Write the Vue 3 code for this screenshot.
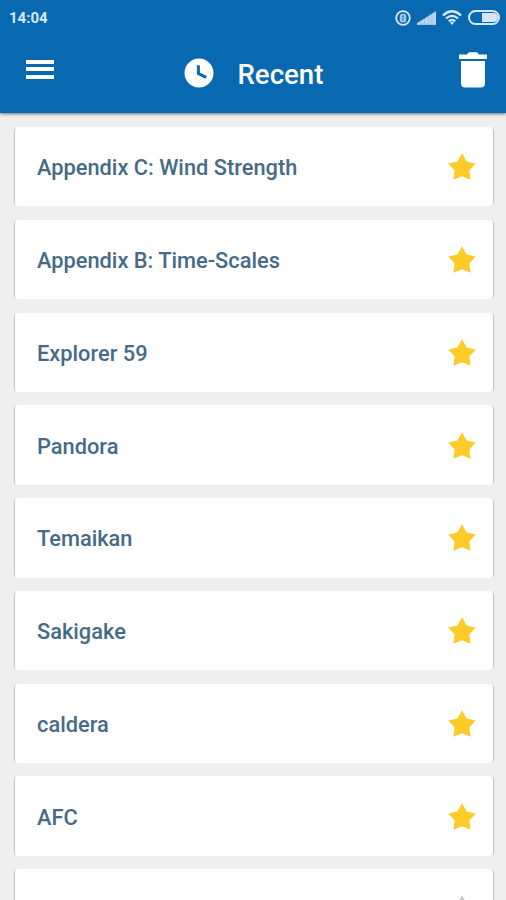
<script setup>
import { ref } from "vue";

const items = ref([
  { title: "Appendix C: Wind Strength", starred: true },
  { title: "Appendix B: Time-Scales", starred: true },
  { title: "Explorer 59", starred: true },
  { title: "Pandora", starred: true },
  { title: "Temaikan", starred: true },
  { title: "Sakigake", starred: true },
  { title: "caldera", starred: true },
  { title: "AFC", starred: true },
  { title: "", starred: false },
]);

function toggleStar(item) {
  item.starred = !item.starred;
}
</script>

<template>
  <div class="screen">
    <header class="top">
      <div class="status-bar">
        <span class="time">14:04</span>
        <div class="status-icons">
          <svg class="lock" viewBox="0 0 16 16">
            <circle cx="8" cy="8" r="6.8" fill="none" stroke="currentColor" stroke-width="1.8" />
            <rect x="4.8" y="3.7" width="6.4" height="8.6" rx="2.6" fill="currentColor" opacity="0.75" />
            <path d="M7 6.2h2M8 7.5v3" stroke="#0869b1" stroke-width="1" />
          </svg>
          <svg class="signal" viewBox="0 0 20 14">
            <path d="M0 14v-1.5L20 0v14z" fill="currentColor" opacity="0.75" />
            <path d="M0 14v-1.5l4-2.5v4zM4.6 14V9.7l3.2-2V14zM8.4 14V7.3l3.2-2.1V14zM12.2 14V4.9l3.2-2.1V14zM16 14V2.5L20 0v14z" fill="currentColor" />
          </svg>
          <svg class="wifi" viewBox="0 0 20 15">
            <g fill="none" stroke="currentColor" stroke-width="2.3">
              <path d="M1 5.3Q10-2.8 19 5.3" />
              <path d="M4 8.5Q10 3.2 16 8.5" />
              <path d="M6.8 11.3Q10 8.5 13.2 11.3" />
            </g>
            <path d="M8 12.4Q10 11 12 12.4L10 15z" fill="currentColor" />
          </svg>
          <svg class="battery" viewBox="0 0 32 15">
            <rect x="1" y="1" width="30" height="13" rx="6.5" fill="none" stroke="currentColor" stroke-width="2" />
            <path d="M14 3h11.5a4.5 4.5 0 0 1 0 9H14z" fill="currentColor" />
          </svg>
        </div>
      </div>

      <div class="toolbar">
        <button class="menu" aria-label="Menu">
          <span /><span /><span />
        </button>
        <h1 class="title">
          <svg class="clock" viewBox="0 0 30 30">
            <circle cx="15" cy="15" r="14.5" fill="#fff" />
            <path d="M14.4 7.3v8.2l7.8 3.8" fill="none" stroke="#0869b1" stroke-width="3" />
          </svg>
          <span>Recent</span>
        </h1>
        <button class="trash" aria-label="Clear">
          <svg viewBox="0 0 28 36">
            <path d="M0 2.5h8L10 .3h8l2 2.2h8V7H0zM2 9h24v22.5a4 4 0 0 1-4 4H6a4 4 0 0 1-4-4z" fill="#fff" />
          </svg>
        </button>
      </div>
    </header>

    <main class="list">
      <article v-for="(item, i) in items" :key="i" class="card">
        <span class="name">{{ item.title }}</span>
        <button class="star" :class="{ on: item.starred }" aria-label="Favourite" @click="toggleStar(item)">
          <svg viewBox="0 0 28 27">
            <path d="M14 .3l4.7 8.1 9 2-6.3 7.1 1.2 9.2-8.6-3.500-8.600 3.500 1.200-9.200L.3 10.400l9-2z" fill="currentColor" />
          </svg>
        </button>
      </article>
    </main>
  </div>
</template>

<style>
body {
  margin: 0;
  background: #efefef;
}
</style>

<style scoped>
.screen {
  display: flex;
  flex-direction: column;
  width: 506px;
  height: 900px;
  overflow: hidden;
  background: #efefef;
  font-family: Roboto, "Liberation Sans", sans-serif;
}

button {
  padding: 0;
  border: none;
  background: none;
  cursor: pointer;
}

svg {
  display: block;
}

.top {
  flex: none;
  height: 113px;
  background: #0869b1;
  box-shadow: 0 1px 3px rgba(0, 0, 0, 0.55);
}

.status-bar {
  display: flex;
  align-items: center;
  justify-content: space-between;
  height: 35px;
  padding: 0 6px 0 9px;
  color: #d8e7f8;
}

.time {
  padding-top: 1px;
  font-size: 15px;
  font-weight: 700;
  line-height: 34px;
}

.status-icons {
  display: flex;
  align-items: center;
}

.lock {
  width: 16px;
  height: 16px;
  margin-right: 6px;
}

.signal {
  width: 19px;
  height: 14px;
  margin-right: 6px;
  opacity: 0.85;
}

.wifi {
  width: 20px;
  height: 15px;
  margin-right: 6px;
}

.battery {
  width: 32px;
  height: 15px;
}

.toolbar {
  display: flex;
  align-items: center;
  height: 78px;
  padding: 0 19px 0 26px;
  box-sizing: border-box;
}

.menu {
  display: grid;
  gap: 3.5px;
  width: 27.5px;
  margin-bottom: 10px;
}

.menu span {
  height: 4px;
  background: #fff;
}

.title {
  display: flex;
  align-items: center;
  gap: 23.5px;
  margin: 0 auto 0 130.5px;
  color: #fff;
  font-size: 27.6px;
  font-weight: 500;
  line-height: 32px;
}

.title span {
  padding-top: 2px;
}

.clock {
  width: 30px;
  height: 30px;
  margin-bottom: 2px;
}

.trash {
  margin-bottom: 8px;
}

.trash svg {
  width: 28px;
  height: 36px;
}

.list {
  display: flex;
  flex-direction: column;
  gap: 13.4px;
  padding: 14px 13px 0 14.5px;
}

.card {
  display: flex;
  flex: none;
  align-items: center;
  justify-content: space-between;
  height: 79.4px;
  padding: 0 17.5px 0 22.5px;
  box-sizing: border-box;
  border-radius: 4px;
  background: #fff;
  box-shadow:
    -1.5px 0 1px -1px rgba(0, 0, 0, 0.2),
    1.5px 0 1px -1px rgba(0, 0, 0, 0.2);
}

.name {
  padding-top: 3px;
  color: #466b86;
  font-size: 21.8px;
  font-weight: 500;
  line-height: 28px;
}

.star {
  color: #c5cacd;
}

.star.on {
  color: #fdcb2a;
}

.star svg {
  width: 28px;
  height: 27px;
}
</style>
